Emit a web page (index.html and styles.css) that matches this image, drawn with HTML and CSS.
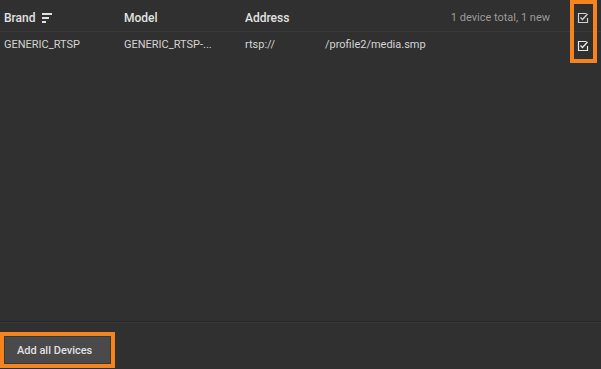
FILE: index.html
```html
<!DOCTYPE html>
<html lang="en">
<head>
    <meta charset="UTF-8">
    <title>Add Devices</title>
    <link rel="stylesheet" href="styles.css">
</head>
<body>
    <div class="panel">
        <div class="device-list">
            <div class="row head-row">
                <div class="cell head">Brand
                    <svg class="sort-icon" width="11" height="10" viewBox="0 0 11 10">
                        <rect x="0" y="0" width="10" height="2" fill="#e0e0e0"/>
                        <rect x="0" y="4" width="7" height="2" fill="#e0e0e0"/>
                        <rect x="0" y="8" width="4" height="2" fill="#e0e0e0"/>
                    </svg>
                </div>
                <div class="cell head">Model</div>
                <div class="cell head address-head">
                    <span>Address</span>
                    <span class="count">1 device total, 1 new</span>
                </div>
                <div class="cell check-cell">
                    <svg class="check" width="12" height="12" viewBox="0 0 12 12">
                        <path d="M9.5 1.5H1.5V10.5H10.5V6" fill="none" stroke="#cfcfcf" stroke-width="1.2"/>
                        <path d="M3.5 5.5L5.5 7.5L10.5 2" fill="none" stroke="#cfcfcf" stroke-width="1.4"/>
                    </svg>
                </div>
            </div>
            <div class="row data-row">
                <div class="cell">GENERIC_RTSP</div>
                <div class="cell">GENERIC_RTSP-...</div>
                <div class="cell"><span class="scheme">rtsp://</span><span>/profile2/media.smp</span></div>
                <div class="cell check-cell">
                    <svg class="check" width="12" height="12" viewBox="0 0 12 12">
                        <path d="M9.5 1.5H1.5V10.5H10.5V6" fill="none" stroke="#e6e6e6" stroke-width="1.2"/>
                        <path d="M3.5 5.5L5.5 7.5L10.5 2" fill="none" stroke="#e6e6e6" stroke-width="1.4"/>
                    </svg>
                </div>
            </div>
            <div class="highlight check-highlight"></div>
        </div>
        <div class="footer">
            <button class="add-btn">Add all Devices</button>
        </div>
    </div>
</body>
</html>
```

FILE: styles.css
```css
body {
    margin: 0;
    background: #303030;
    font-family: Roboto, "Liberation Sans", sans-serif;
    color: #d4d4d4;
}

.panel {
    height: 369px;
    display: flex;
    flex-direction: column;
}

.device-list {
    position: relative;
    flex: 1;
}

.row {
    display: grid;
    grid-template-columns: 120px 121px 1fr 36px;
    padding-left: 4px;
    align-items: center;
}

.head-row {
    height: 31px;
    border-bottom: 1px solid #3a3a3a;
}

.data-row {
    height: 25px;
}

.cell {
    font-size: 11px;
    white-space: nowrap;
}

.head {
    font-size: 12px;
    font-weight: 500;
    color: #e2e2e2;
    padding-top: 4px;
}

.sort-icon {
    margin-left: 3px;
    vertical-align: -1px;
}

.address-head {
    display: flex;
    justify-content: space-between;
    padding-right: 15px;
}

.count {
    font-size: 11px;
    font-weight: 400;
    color: #9a9a9a;
}

.scheme {
    display: inline-block;
    width: 80px;
}

.check-cell {
    display: flex;
    justify-content: center;
    padding-top: 2px;
}

.head-row .check-cell {
    padding-top: 4px;
}

.highlight {
    position: absolute;
    border: 4px solid #f7831f;
}

.check-highlight {
    top: 0;
    left: 570px;
    width: 19px;
    height: 55px;
}

.footer {
    height: 48px;
    border-top: 1px solid #272727;
    box-shadow: inset 0 1px 0 #383838;
    display: flex;
    align-items: flex-start;
    padding: 14px 0 0 4px;
    box-sizing: border-box;
}

.add-btn {
    width: 107px;
    height: 28px;
    background: #4a4a4a;
    color: #e0e0e0;
    border: 1px solid #383838;
    border-radius: 0;
    font-family: Roboto, "Liberation Sans", sans-serif;
    font-size: 11px;
    font-weight: 500;
    outline: 4px solid #f7831f;
    text-align: left;
    padding: 0 0 0 12px;
}
```
